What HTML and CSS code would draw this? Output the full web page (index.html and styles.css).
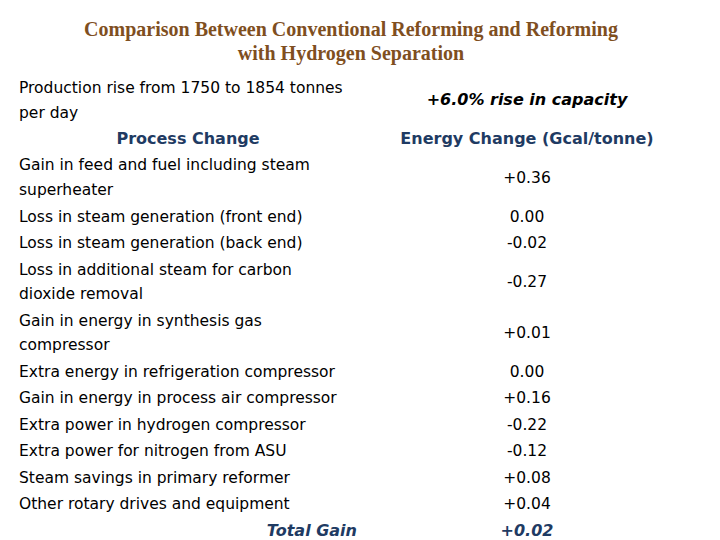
FILE: index.html
```html
<!DOCTYPE html>
<html lang="en">
<head>
<meta charset="utf-8">
<title>Comparison Between Conventional Reforming and Reforming with Hydrogen Separation</title>
<link rel="stylesheet" href="styles.css">
</head>
<body>
<h1 class="title">Comparison Between Conventional Reforming and Reforming<br>with Hydrogen Separation</h1>
<div class="table">
  <div class="cell label">Production rise from 1750 to 1854 tonnes<br>per day</div>
  <div class="cell value capacity">+6.0% rise in capacity</div>

  <div class="cell head">Process Change</div>
  <div class="cell head">Energy Change (Gcal/tonne)</div>

  <div class="cell label">Gain in feed and fuel including steam<br>superheater</div>
  <div class="cell value">+0.36</div>

  <div class="cell label">Loss in steam generation (front end)</div>
  <div class="cell value">0.00</div>

  <div class="cell label">Loss in steam generation (back end)</div>
  <div class="cell value">-0.02</div>

  <div class="cell label">Loss in additional steam for carbon<br>dioxide removal</div>
  <div class="cell value">-0.27</div>

  <div class="cell label">Gain in energy in synthesis gas<br>compressor</div>
  <div class="cell value">+0.01</div>

  <div class="cell label">Extra energy in refrigeration compressor</div>
  <div class="cell value">0.00</div>

  <div class="cell label">Gain in energy in process air compressor</div>
  <div class="cell value">+0.16</div>

  <div class="cell label">Extra power in hydrogen compressor</div>
  <div class="cell value">-0.22</div>

  <div class="cell label">Extra power for nitrogen from ASU</div>
  <div class="cell value">-0.12</div>

  <div class="cell label">Steam savings in primary reformer</div>
  <div class="cell value">+0.08</div>

  <div class="cell label">Other rotary drives and equipment</div>
  <div class="cell value">+0.04</div>

  <div class="cell total-label">Total Gain</div>
  <div class="cell value total">+0.02</div>
</div>
</body>
</html>
```

FILE: styles.css
```css
html, body {
  margin: 0;
  padding: 0;
  background: #ffffff;
}

body {
  width: 720px;
  height: 540px;
  overflow: hidden;
  font-family: "DejaVu Sans", Verdana, sans-serif;
  color: #000000;
}

.title {
  margin: 0;
  padding: 17px 18px 0 0;
  font-family: "Liberation Serif", "Times New Roman", serif;
  font-weight: bold;
  font-size: 20px;
  line-height: 24px;
  color: #7f4f1f;
  text-align: center;
}

.table {
  display: grid;
  grid-template-columns: 338px 340px;
  align-items: center;
  padding-left: 19px;
  margin-top: 10px;
}

.cell {
  padding: 0.85px 0;
  font-size: 15.5px;
  line-height: 24.75px;
  white-space: nowrap;
}

.value {
  text-align: center;
}

.capacity {
  font-size: 16px;
  font-weight: bold;
  font-style: italic;
}

.head {
  font-size: 16px;
  font-weight: bold;
  color: #1f3b63;
  text-align: center;
}

.total-label {
  font-size: 16px;
  font-weight: bold;
  font-style: italic;
  color: #1f3b63;
  text-align: right;
}

.total {
  font-size: 16px;
  font-weight: bold;
  font-style: italic;
  color: #1f3b63;
}
```
